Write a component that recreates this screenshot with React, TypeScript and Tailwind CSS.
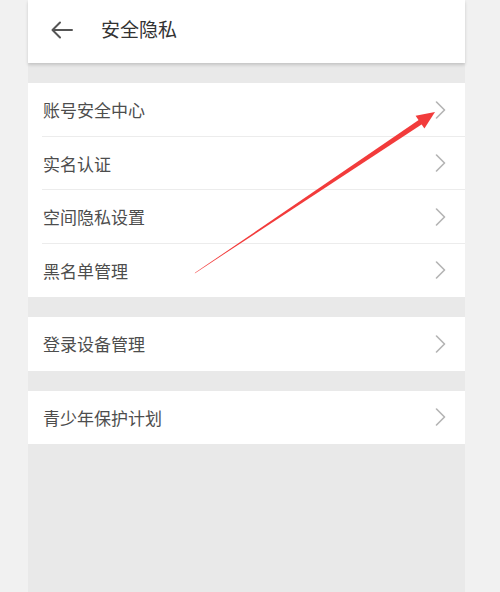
import { type ReactNode } from 'react'

const GROUPS: string[][] = [
  ['账号安全中心', '实名认证', '空间隐私设置', '黑名单管理'],
  ['登录设备管理'],
  ['青少年保护计划'],
]

function Chevron() {
  return (
    <svg width="11" height="18" viewBox="0 0 11 18" className="shrink-0">
      <path d="M1.5 1 L9.5 9 L1.5 17" fill="none" stroke="#b3b3b3" strokeWidth="1.6" strokeLinecap="round" strokeLinejoin="round" />
    </svg>
  )
}

function Row({ label, last }: { label: string; last: boolean }) {
  return (
    <div className="relative flex h-[53.5px] items-center justify-between pl-[15px] pr-[19px]">
      <span className="text-[17px] text-[#4d4d4d]">{label}</span>
      <Chevron />
      {!last && <div className="absolute bottom-0 left-[14px] right-0 h-px bg-[#ececec]" />}
    </div>
  )
}

function Group({ children }: { children: ReactNode }) {
  return <div className="mt-[20px] bg-white">{children}</div>
}

export default function App() {
  return (
    <div
      className="relative flex h-[592px] w-[500px] overflow-hidden bg-[#f1f1f1]"
      style={{ fontFamily: '"Noto Sans CJK SC", "Noto Sans", sans-serif' }}
    >
      <div className="ml-[28px] flex h-full w-[437px] flex-col bg-[#e9e9e9]">
        <div className="relative z-10 flex h-[63px] items-center bg-white pb-[4px] shadow-[0_2px_3px_rgba(0,0,0,0.16)]">
          <svg width="24" height="20" viewBox="0 0 24 20" className="ml-[22px]">
            <path d="M22 10 H3 M10 2.5 L2.5 10 L10 17.5" fill="none" stroke="#555" strokeWidth="2" strokeLinecap="round" strokeLinejoin="round" />
          </svg>
          <span className="ml-[27px] text-[19px] text-[#333]">安全隐私</span>
        </div>
        {GROUPS.map((g, i) => (
          <Group key={i}>
            {g.map((label, j) => (
              <Row key={label} label={label} last={j === g.length - 1} />
            ))}
          </Group>
        ))}
      </div>

      {/* red annotation arrow */}
      <svg className="pointer-events-none absolute inset-0" width="500" height="592" viewBox="0 0 500 592">
        <polygon points="194.7,273.4 195.3,272.6 419.4,119.5 422.3,123.9" fill="#f23b3b" />
        <polygon points="435,112 415.6,115.8 424.4,128.4" fill="#f23b3b" />
      </svg>
    </div>
  )
}
